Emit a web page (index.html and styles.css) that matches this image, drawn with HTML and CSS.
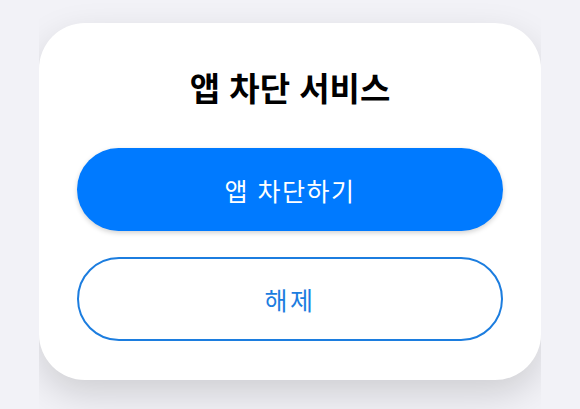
FILE: index.html
```html
<!DOCTYPE html>
<html lang="ko">
<head>
<meta charset="utf-8">
<title>앱 차단 서비스</title>
<link rel="stylesheet" href="styles.css">
</head>
<body>
  <div class="stage">
    <section class="sheet">
      <h1 class="sheet-title">앱 차단 서비스</h1>
      <div class="actions">
        <button class="btn btn-primary" type="button">앱 차단하기</button>
        <button class="btn btn-outline" type="button">해제</button>
      </div>
    </section>
  </div>
</body>
</html>
```

FILE: styles.css
```css
html, body {
  margin: 0;
  padding: 0;
  height: 100%;
}

body {
  background: #f2f2f7;
  font-family: "Noto Sans CJK KR", "Noto Sans", sans-serif;
  display: flex;
  justify-content: center;
  overflow: hidden;
}

/* column that holds the sheet; its shadow is cut at the sides */
.stage {
  width: 502px;
  height: 100%;
  overflow: hidden;
  padding-top: 23px;
  box-sizing: border-box;
}

.sheet {
  background: #ffffff;
  border-radius: 46px;
  height: 357px;
  box-sizing: border-box;
  padding: 43px 38px 39px;
  display: flex;
  flex-direction: column;
  box-shadow: 0 14px 36px rgba(0, 0, 0, 0.15);
}

.sheet-title {
  margin: 0;
  text-align: center;
  font-size: 33px;
  line-height: 42px;
  font-weight: 700;
  color: #000000;
}

.actions {
  margin-top: 40px;
  display: flex;
  flex-direction: column;
  gap: 26px;
}

.btn {
  font-family: inherit;
  height: 84px;
  border-radius: 42px;
  font-size: 25px;
  font-weight: 400;
  letter-spacing: 1.5px;
  cursor: pointer;
}

.btn-primary {
  height: 83px;
  background: #007aff;
  color: #ffffff;
  border: none;
  box-shadow: 0 2px 5px rgba(0, 0, 0, 0.18);
}

.btn-outline {
  background: #ffffff;
  color: #1c7ddf;
  border: 2.5px solid #1c7ddf;
  letter-spacing: 2.5px;
}
```
